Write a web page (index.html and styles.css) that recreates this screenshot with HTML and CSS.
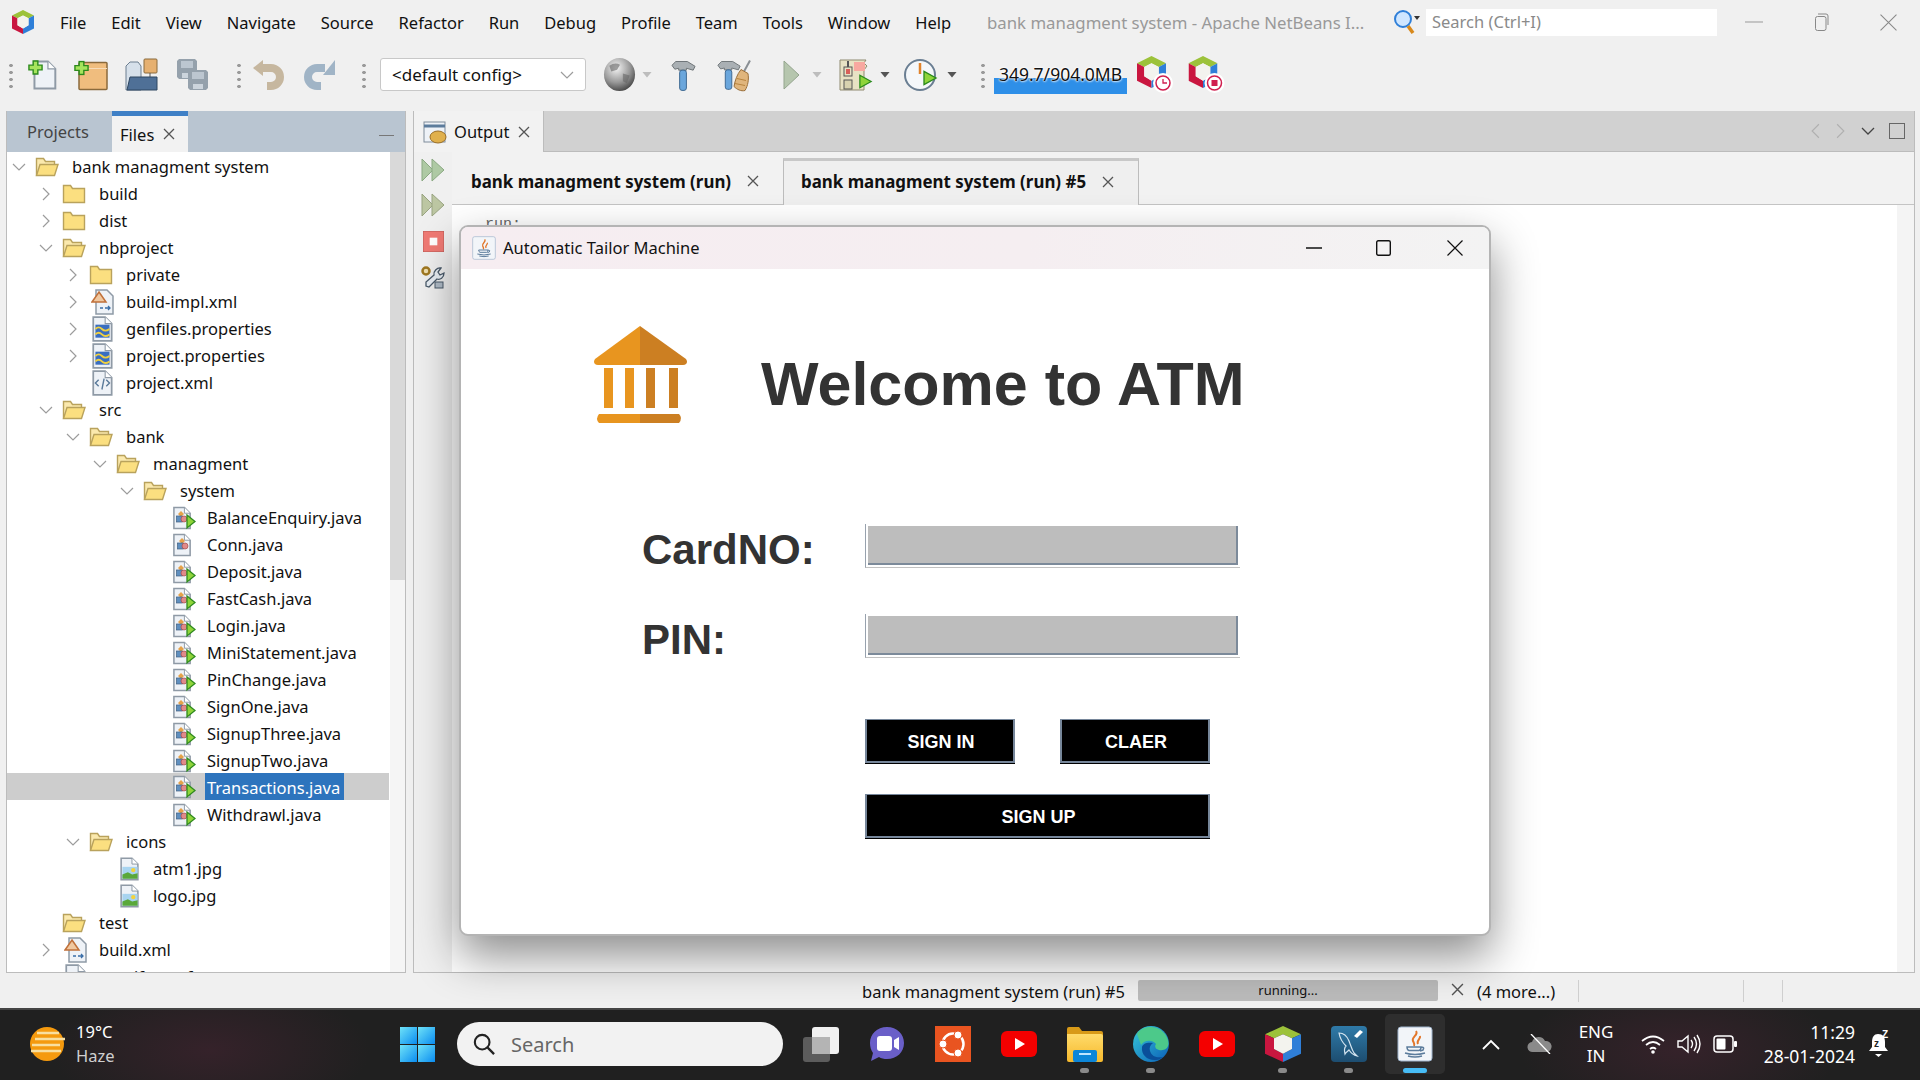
FILE: index.html
```html
<!DOCTYPE html>
<html lang="en">
<head>
    <meta charset="UTF-8">
    <title>bank managment system - Apache NetBeans IDE</title>
    <link rel="stylesheet" href="styles.css">
</head>
<body>
<!-- icon sprites -->
<svg class="defs" aria-hidden="true">
    <defs>
        <linearGradient id="gStart" x1="0" y1="0" x2="1" y2="1"><stop offset="0" stop-color="#6fe3f8"/><stop offset="1" stop-color="#0a8cf0"/></linearGradient>
        <linearGradient id="gFolder" x1="0" y1="0" x2="0" y2="1"><stop offset="0" stop-color="#ffdb6b"/><stop offset="1" stop-color="#f6b92c"/></linearGradient>
        <linearGradient id="gEdge" x1="0" y1="0" x2="1" y2="1"><stop offset="0" stop-color="#37c8d8"/><stop offset="1" stop-color="#0b5fb8"/></linearGradient>
        <linearGradient id="gSql" x1="0" y1="0" x2="0" y2="1"><stop offset="0" stop-color="#2f7aa8"/><stop offset="1" stop-color="#1d4d70"/></linearGradient>
        <radialGradient id="gGlobe" cx=".4" cy=".3" r=".8"><stop offset="0" stop-color="#f4f4f4"/><stop offset=".55" stop-color="#999"/><stop offset="1" stop-color="#333"/></radialGradient>
        <symbol id="nb" viewBox="3 1 18 22" preserveAspectRatio="none">
            <polygon points="12,1 21,6 16.5,8.5 12,6 7.5,8.5 3,6" fill="#9cc23a"/>
            <polygon points="3,6 7.5,8.5 7.5,15 12,18 12,23 3,18" fill="#c9163f"/>
            <polygon points="21,6 16.5,8.5 16.5,15 12,18 12,23 21,18" fill="#2f7fd8"/>
            <polygon points="12,6 16.5,8.5 16.5,15 12,18 7.5,15 7.5,8.5" fill="#f3f3ee"/>
        </symbol>
        <symbol id="folder" viewBox="0 0 24 20">
            <path d="M1.5 1.5h7l2 3h12v14h-21z" fill="#fbdf80" stroke="#b9a25c" stroke-width="1.4"/>
        </symbol>
        <symbol id="folder-open" viewBox="0 0 24 20">
            <path d="M1.5 18.5v-17h7l2 3h9v3" fill="#fbe9ad" stroke="#b9a25c" stroke-width="1.4"/>
            <path d="M1.5 18.5l3.5-11h18l-3.5 11z" fill="#fbdf80" stroke="#b9a25c" stroke-width="1.4"/>
        </symbol>
        <symbol id="page" viewBox="0 0 22 24">
            <path d="M2 1h11l6 6v16H2z" fill="#eef2f7" stroke="#8f9aa6" stroke-width="1.6"/>
            <path d="M13 1v6h6" fill="#fff" stroke="#8f9aa6" stroke-width="1"/>
        </symbol>
        <symbol id="java-main" viewBox="0 0 24 24">
            <use href="#page" width="21" height="24"/>
            <polygon points="9,5 12,8 9,11 6,8" fill="#e5a24a"/>
            <rect x="4.5" y="10" width="6" height="6" fill="#5f8fbf" stroke="#3f5f80" stroke-width=".7"/>
            <circle cx="12" cy="13" r="3" fill="#e08a8a" stroke="#a84a4a" stroke-width=".7"/>
            <path d="M15 9l8 6.5-8 6.5z" fill="#8fd43a" stroke="#2f8a1f" stroke-width="1.3"/>
        </symbol>
        <symbol id="java-plain" viewBox="0 0 24 24">
            <use href="#page" width="21" height="24"/>
            <polygon points="10,5 13,8 10,11 7,8" fill="#e5a24a"/>
            <rect x="5.5" y="10" width="6" height="6" fill="#5f8fbf" stroke="#3f5f80" stroke-width=".7"/>
            <circle cx="13" cy="13" r="3" fill="#e08a8a" stroke="#a84a4a" stroke-width=".7"/>
        </symbol>
        <symbol id="ant" viewBox="0 0 24 26">
            <path d="M5 1h11l6 6v18H5z" fill="#eef2f7" stroke="#8f9aa6" stroke-width="1.5"/>
            <path d="M8 3l7 10H1z" fill="#f0c8a0" stroke="#c0703a" stroke-width="1.5"/>
            <path d="M9 19h3M14 19h5M17 17l2 2-2 2" fill="none" stroke="#3a6ea8" stroke-width="1.3"/>
        </symbol>
        <symbol id="props" viewBox="0 0 22 24">
            <use href="#page" width="22" height="24"/>
            <rect x="4" y="8" width="13" height="12" fill="#3a6ec0"/>
            <path d="M4 12q3-3 6 0t7 0M4 17q3-3 6 0t7 0" fill="none" stroke="#f0d040" stroke-width="1.7"/>
        </symbol>
        <symbol id="xml" viewBox="0 0 22 24">
            <use href="#page" width="22" height="24"/>
            <path d="M7 9l-3 3 3 3M14 9l3 3-3 3M10 18l2-10" fill="none" stroke="#5a7a9a" stroke-width="1.3"/>
        </symbol>
        <symbol id="image" viewBox="0 0 20 24">
            <use href="#page" width="20" height="24"/>
            <rect x="3" y="10" width="14" height="11" fill="#a8d4f0"/>
            <circle cx="13" cy="13" r="2" fill="#f4d23c"/>
            <path d="M3 21v-4l5-2 4 2 5-1v5z" fill="#5aa83a"/>
        </symbol>
        <symbol id="plus" viewBox="0 0 16 16">
            <path d="M5.5 1h5v4.500H15v5h-4.500V15h-5v-4.500H1v-5h4.500z" fill="#a6e45c" stroke="#2c8a1c" stroke-width="1.5"/>
        </symbol>
        <symbol id="floppy" viewBox="0 0 22 22">
            <path d="M1 3l2-2h16l2 2v16l-2 2H3l-2-2z" fill="#95a1ac"/>
            <rect x="5" y="3" width="12" height="7" fill="#bcc6d0"/>
            <rect x="6" y="15" width="10" height="5" fill="#ccd4dc"/>
        </symbol>
        <symbol id="hammer" viewBox="0 0 28 34">
            <path d="M2 7l4-4h12l8 5-2 4-7-2v2H9v-2L5 11z" fill="#aab0b4" stroke="#6c7276" stroke-width="1"/>
            <rect x="10" y="12" width="7" height="21" rx="2.5" fill="#6aa6dc" stroke="#3a6690" stroke-width="1"/>
        </symbol>
        <symbol id="small-play" viewBox="0 0 24 24">
            <path d="M3 2l18 10L3 22z" fill="#8fd43a" stroke="#2a8a1c" stroke-width="2"/>
        </symbol>
        <symbol id="java-cup" viewBox="0 0 36 36">
            <rect x="1" y="1" width="34" height="34" rx="3" fill="#f2f5f9" stroke="#9fb4cc"/>
            <path d="M19 5c3 4-5 6-3 10 1 2 2 3 1 5M23 10c1 3-4 4-2 8" fill="none" stroke="#e2762a" stroke-width="2"/>
            <path d="M10 21h14q0 3-2 3.500h-10q-2-.5-2-3.500zM24 21q4 0 2 3l-3 1M8 27q10 3 20 0M11 30q7 2 14 0" fill="none" stroke="#5c7c9c" stroke-width="1.5"/>
        </symbol>
        <symbol id="yt" viewBox="0 0 36 26">
            <rect width="36" height="26" rx="6" fill="#f40000"/>
            <path d="M14 7l10 6-10 6z" fill="#fff"/>
        </symbol>
        <symbol id="x" viewBox="0 0 12 12">
            <path d="M1 1l10 10M11 1L1 11" fill="none" stroke="currentColor" stroke-width="1.3"/>
        </symbol>
        <symbol id="down" viewBox="0 0 14 8">
            <path d="M1 1l6 6 6-6" fill="none" stroke="#9c9c9c" stroke-width="1.2"/>
        </symbol>
        <symbol id="right" viewBox="0 0 8 14">
            <path d="M1 1l6 6-6 6" fill="none" stroke="#9c9c9c" stroke-width="1.2"/>
        </symbol>
    </defs>
</svg>

<div class="app">
    <header class="titlebar">
        <svg class="app-logo"><use href="#nb" width="22" height="24"/></svg>
        <nav class="menu">
            <span>File</span><span>Edit</span><span>View</span><span>Navigate</span><span>Source</span><span>Refactor</span><span>Run</span><span>Debug</span><span>Profile</span><span>Team</span><span>Tools</span><span>Window</span><span>Help</span>
        </nav>
        <div class="ide-title">bank managment system - Apache NetBeans I...</div>
        <svg class="find-icon" viewBox="0 0 28 26">
            <circle cx="11" cy="10" r="8" fill="#cfe6ff" stroke="#2f7fd8" stroke-width="2"/>
            <path d="M16 17l5 7" stroke="#d8891c" stroke-width="3.5"/>
            <path d="M22 7h6l-3 4z" fill="#333"/>
        </svg>
        <div class="find-box">Search (Ctrl+I)</div>
        <div class="win-ctrls">
            <svg class="ctl-min" viewBox="0 0 18 2"><path d="M0 1h18" stroke="#999"/></svg>
            <svg class="ctl-restore" viewBox="0 0 14 18"><path d="M3 1h8q2 0 2 2v9" fill="none" stroke="#888"/><rect x=".5" y="3.5" width="10.5" height="14" rx="2" fill="none" stroke="#888"/></svg>
            <svg class="ctl-close" viewBox="0 0 16 16"><path d="M.5.5l15 15M15.500.5l-15 15" stroke="#888"/></svg>
        </div>
    </header>

    <div class="toolbar">
        <i class="grip"></i>
        <svg class="t30 ml15" viewBox="0 0 30 31"><use href="#page" x="4" y="1" width="27" height="30"/><use href="#plus" width="15" height="15" y="1"/></svg>
        <svg class="t34 ml16" viewBox="0 0 34 31"><rect x="5" y="3" width="28" height="27" rx="1" fill="#f0bd7e" stroke="#8a6a3c" stroke-width="1.5"/><path d="M5 9h28" stroke="#f8dcb8"/><use href="#plus" width="15" height="15" y="1"/></svg>
        <svg class="t33 ml17" viewBox="0 0 33 33"><path d="M1 8l4-4h8l3 4v24H1z" fill="#d6e0ea" stroke="#6c7e90"/><rect x="19" y="1" width="13" height="14" rx="1" fill="#e6b070" stroke="#8a6a3c"/><path d="M25 15v5" stroke="#555"/><path d="M5 19h27v13H2z" fill="#4f7097" stroke="#2f4660"/></svg>
        <svg class="t33 ml18" viewBox="0 0 33 33"><use href="#floppy" width="22" height="22"/><use href="#floppy" x="11" y="11" width="22" height="22"/></svg>
        <i class="grip ml28"></i>
        <svg class="t32 ml12" viewBox="0 0 32 32"><path d="M10 9h8a9 9 0 0 1 0 18h-4" fill="none" stroke="#c6b79f" stroke-width="8"/><path d="M0 9l10-8v16z" fill="#c6b79f"/></svg>
        <svg class="t32 ml18" viewBox="0 0 32 32"><path d="M22 9h-8a9 9 0 0 0 0 18h4" fill="none" stroke="#a0b4c6" stroke-width="8"/><path d="M32 1v15H20z" fill="#a0b4c6"/></svg>
        <i class="grip ml27"></i>
        <div class="combo ml14"><span>&lt;default config&gt;</span><svg class="combo-arrow"><use href="#down"/></svg></div>
        <svg class="t33 ml17" viewBox="0 0 33 34"><ellipse cx="16.5" cy="17" rx="16" ry="17" fill="url(#gGlobe)"/><path d="M6 8q6-4 11-1l-3 5-6 2zM20 16l7 2-3 8-4-2z" fill="#666" opacity=".6"/></svg>
        <i class="caret caret-light ml6"></i>
        <svg class="t27 ml18" viewBox="0 0 28 34"><use href="#hammer" width="28" height="34"/></svg>
        <svg class="t36 ml19" viewBox="0 0 36 34"><use href="#hammer" width="26" height="34"/><path d="M34 3l-6 11" stroke="#8a8f94" stroke-width="2"/><path d="M25 12l7 4c1 6 0 12-3 17-4 1-8-1-11-4 1-6 3-12 7-17z" fill="#e0b57c" stroke="#9a6e38"/><path d="M21 21l9 2M19 26l10 2" stroke="#b8843f"/></svg>
        <svg class="t17 ml31" viewBox="0 0 17 30"><path d="M1 1l15 14L1 29z" fill="#b6c6ae" stroke="#94a58e"/></svg>
        <i class="caret caret-light ml12"></i>
        <svg class="t34 ml17" viewBox="0 0 34 34"><path d="M1 2h26l-2 3 3 3-3 4v20H1z" fill="#e8e2c4" stroke="#8f8a70"/><rect x="5" y="9" width="8" height="9" fill="#e8e2c4" stroke="#555"/><rect x="7" y="11" width="4" height="5" fill="#d8605a"/><path d="M9 3v6" stroke="#555" stroke-width="2"/><rect x="15" y="4" width="11" height="9" fill="#f8a8a0"/><rect x="5" y="22" width="8" height="9" fill="#d8d2b0" stroke="#555"/><use href="#small-play" x="19" y="14" width="15" height="19"/></svg>
        <i class="caret ml7"></i>
        <svg class="t34 ml14" viewBox="0 0 34 34"><circle cx="16" cy="17" r="15" fill="#f4f7fa" stroke="#6a7e92" stroke-width="2"/><path d="M16 5v11" stroke="#e0832c" stroke-width="2.5"/><use href="#small-play" x="18" y="9" width="16" height="22"/></svg>
        <i class="caret ml9"></i>
        <i class="grip ml24"></i>
        <div class="memory ml9">349.7/904.0MB</div>
        <svg class="t36 ml10" viewBox="0 0 36 37"><use href="#nb" width="29" height="32"/><circle cx="26" cy="27" r="10" fill="#fff"/><circle cx="26" cy="27" r="7" fill="#fff" stroke="#d01f4f" stroke-width="1.5"/><path d="M26 23v4h4" fill="none" stroke="#d01f4f" stroke-width="1.3"/></svg>
        <svg class="t37 ml15" viewBox="0 0 36 37"><use href="#nb" width="29" height="32"/><circle cx="26" cy="27" r="10" fill="#fff"/><circle cx="26" cy="27" r="7" fill="#fff" stroke="#d01f4f" stroke-width="1.5"/><rect x="23" y="24" width="6" height="6" fill="#d01f4f"/></svg>
    </div>

    <main class="panels">
        <section class="files-pane">
            <div class="pane-tabs">
                <div class="ptab">Projects</div>
                <div class="ptab ptab-active">Files <svg class="tab-x"><use href="#x"/></svg></div>
                <i class="pane-min"></i>
            </div>
            <div class="tree-wrap">
                <ul class="tree">
                    <li class="d0"><svg class="ar"><use href="#down" width="14" height="8" x="5" y="8"/></svg><svg class="ico"><use href="#folder-open"/></svg>bank managment system</li>
                    <li class="d1"><svg class="ar"><use href="#right" width="8" height="14" x="8" y="5"/></svg><svg class="ico"><use href="#folder"/></svg>build</li>
                    <li class="d1"><svg class="ar"><use href="#right" width="8" height="14" x="8" y="5"/></svg><svg class="ico"><use href="#folder"/></svg>dist</li>
                    <li class="d1"><svg class="ar"><use href="#down" width="14" height="8" x="5" y="8"/></svg><svg class="ico"><use href="#folder-open"/></svg>nbproject</li>
                    <li class="d2"><svg class="ar"><use href="#right" width="8" height="14" x="8" y="5"/></svg><svg class="ico"><use href="#folder"/></svg>private</li>
                    <li class="d2"><svg class="ar"><use href="#right" width="8" height="14" x="8" y="5"/></svg><svg class="ico ico-file"><use href="#ant"/></svg>build-impl.xml</li>
                    <li class="d2"><svg class="ar"><use href="#right" width="8" height="14" x="8" y="5"/></svg><svg class="ico ico-file"><use href="#props"/></svg>genfiles.properties</li>
                    <li class="d2"><svg class="ar"><use href="#right" width="8" height="14" x="8" y="5"/></svg><svg class="ico ico-file"><use href="#props"/></svg>project.properties</li>
                    <li class="d2"><i class="ar"></i><svg class="ico ico-file"><use href="#xml"/></svg>project.xml</li>
                    <li class="d1"><svg class="ar"><use href="#down" width="14" height="8" x="5" y="8"/></svg><svg class="ico"><use href="#folder-open"/></svg>src</li>
                    <li class="d2"><svg class="ar"><use href="#down" width="14" height="8" x="5" y="8"/></svg><svg class="ico"><use href="#folder-open"/></svg>bank</li>
                    <li class="d3"><svg class="ar"><use href="#down" width="14" height="8" x="5" y="8"/></svg><svg class="ico"><use href="#folder-open"/></svg>managment</li>
                    <li class="d4"><svg class="ar"><use href="#down" width="14" height="8" x="5" y="8"/></svg><svg class="ico"><use href="#folder-open"/></svg>system</li>
                    <li class="d5"><i class="ar"></i><svg class="ico ico-file"><use href="#java-main"/></svg>BalanceEnquiry.java</li>
                    <li class="d5"><i class="ar"></i><svg class="ico ico-file"><use href="#java-plain"/></svg>Conn.java</li>
                    <li class="d5"><i class="ar"></i><svg class="ico ico-file"><use href="#java-main"/></svg>Deposit.java</li>
                    <li class="d5"><i class="ar"></i><svg class="ico ico-file"><use href="#java-main"/></svg>FastCash.java</li>
                    <li class="d5"><i class="ar"></i><svg class="ico ico-file"><use href="#java-main"/></svg>Login.java</li>
                    <li class="d5"><i class="ar"></i><svg class="ico ico-file"><use href="#java-main"/></svg>MiniStatement.java</li>
                    <li class="d5"><i class="ar"></i><svg class="ico ico-file"><use href="#java-main"/></svg>PinChange.java</li>
                    <li class="d5"><i class="ar"></i><svg class="ico ico-file"><use href="#java-main"/></svg>SignOne.java</li>
                    <li class="d5"><i class="ar"></i><svg class="ico ico-file"><use href="#java-main"/></svg>SignupThree.java</li>
                    <li class="d5"><i class="ar"></i><svg class="ico ico-file"><use href="#java-main"/></svg>SignupTwo.java</li>
                    <li class="d5 row-sel"><i class="ar"></i><svg class="ico ico-file"><use href="#java-main"/></svg><span class="sel-text">Transactions.java</span></li>
                    <li class="d5"><i class="ar"></i><svg class="ico ico-file"><use href="#java-main"/></svg>Withdrawl.java</li>
                    <li class="d2"><svg class="ar"><use href="#down" width="14" height="8" x="5" y="8"/></svg><svg class="ico"><use href="#folder-open"/></svg>icons</li>
                    <li class="d3"><i class="ar"></i><svg class="ico ico-file"><use href="#image"/></svg>atm1.jpg</li>
                    <li class="d3"><i class="ar"></i><svg class="ico ico-file"><use href="#image"/></svg>logo.jpg</li>
                    <li class="d1"><i class="ar"></i><svg class="ico"><use href="#folder-open"/></svg>test</li>
                    <li class="d1"><svg class="ar"><use href="#right" width="8" height="14" x="8" y="5"/></svg><svg class="ico ico-file"><use href="#ant"/></svg>build.xml</li>
                    <li class="d1"><i class="ar"></i><svg class="ico ico-file"><use href="#xml"/></svg>manifest.mf</li>
                </ul>
                <div class="tree-scroll"><div class="tree-thumb"></div></div>
            </div>
        </section>

        <section class="output-pane">
            <div class="output-tabs">
                <div class="otab">
                    <svg class="otab-ico" viewBox="0 0 24 24"><rect x="1" y="2" width="21" height="20" fill="#eef2f7" stroke="#7f8c9a"/><path d="M1 6h21" stroke="#5c7c9c" stroke-width="3"/><ellipse cx="15" cy="17" rx="8" ry="6" fill="#e0b04c" stroke="#9a6e28"/></svg>
                    Output <svg class="tab-x"><use href="#x"/></svg>
                </div>
                <div class="pane-nav">
                    <svg class="nav-i" viewBox="0 0 8 14"><path d="M7 1L1 7l6 6" fill="none" stroke="#b0b0b0"/></svg>
                    <svg class="nav-i" viewBox="0 0 8 14"><path d="M1 1l6 6-6 6" fill="none" stroke="#b0b0b0"/></svg>
                    <svg class="nav-d" viewBox="0 0 14 8"><path d="M1 1l6 6 6-6" fill="none" stroke="#444" stroke-width="1.3"/></svg>
                    <i class="nav-box"></i>
                </div>
            </div>
            <div class="output-main">
                <div class="gutter">
                    <svg class="g-ico" viewBox="0 0 24 24"><path d="M1 1l11 11L1 23z" fill="#aec9a4" stroke="#8aa982"/><path d="M11 1l12 11-12 11z" fill="#aec9a4" stroke="#8aa982"/></svg>
                    <svg class="g-ico" viewBox="0 0 24 24"><path d="M1 1l11 11L1 23z" fill="#bcc6a2" stroke="#98a380"/><path d="M11 1l12 11-12 11z" fill="#bcc6a2" stroke="#98a380"/></svg>
                    <svg class="g-stop" viewBox="0 0 22 22"><rect width="22" height="22" fill="#f07a74" stroke="#b85a55"/><rect x="7" y="7" width="8" height="8" fill="#fff"/></svg>
                    <svg class="g-ico" viewBox="0 0 24 24"><circle cx="5" cy="5" r="3.5" fill="#f0e0b0" stroke="#a07820" stroke-width="2.5"/><path d="M20 2l-3 4 2 3 4-2c0 5-4 7-7 6l-8 8-3-1 0-4 8-7c-1-3 3-8 7-7z" fill="#e8eef4" stroke="#4a5a6a" stroke-width="1.3"/><rect x="14" y="16" width="8" height="6" fill="#b0bcc8" stroke="#4a5a6a"/></svg>
                </div>
                <div class="console">
                    <div class="sub-tabs">
                        <div class="stab">bank managment system (run) <svg class="tab-x"><use href="#x"/></svg></div>
                        <div class="stab stab-active">bank managment system (run) #5 <svg class="tab-x"><use href="#x"/></svg></div>
                    </div>
                    <div class="console-body">
                        <pre class="console-text">run:</pre>
                        <div class="console-scroll"></div>
                    </div>
                </div>
            </div>
        </section>
    </main>

    <footer class="statusbar">
        <span class="st-name">bank managment system (run) #5</span>
        <div class="st-progress">running...</div>
        <svg class="st-x"><use href="#x"/></svg>
        <span class="st-more">(4 more...)</span>
        <i class="st-sep"></i>
        <i class="st-sep st-sep2"></i>
        <i class="st-sep st-sep3"></i>
    </footer>

    <!-- the running swing app -->
    <div class="atm-window">
        <div class="atm-title">
            <svg class="atm-ico"><use href="#java-cup"/></svg>
            <span class="atm-name">Automatic Tailor Machine</span>
            <div class="atm-ctrls">
                <svg class="a-min" viewBox="0 0 16 2"><path d="M0 1h16" stroke="#111" stroke-width="1.3"/></svg>
                <svg class="a-max" viewBox="0 0 15 16"><rect x=".7" y=".7" width="13.6" height="14.6" rx="1.5" fill="none" stroke="#111" stroke-width="1.4"/></svg>
                <svg class="a-close" viewBox="0 0 16 16"><path d="M.5.5l15 15M15.500.5l-15 15" stroke="#111" stroke-width="1.2"/></svg>
            </div>
        </div>
        <div class="atm-body">
            <div class="atm-head">
                <svg class="bank-logo" viewBox="0 0 95 97">
                    <path d="M47 0L2 33q-2 3 0 5 1 1 3 1h42z" fill="#e8951f"/>
                    <path d="M47 0l46 33q2 3 0 5-1 1-3 1H47z" fill="#cc7f22"/>
                    <rect x="11" y="42" width="9" height="40" fill="#e8951f"/>
                    <rect x="32" y="42" width="9" height="40" fill="#e8951f"/>
                    <rect x="53" y="42" width="9" height="40" fill="#cc7f22"/>
                    <rect x="76" y="42" width="9" height="40" fill="#cc7f22"/>
                    <path d="M6 88h41v9H6q-4-4 0-9z" fill="#e8951f"/>
                    <path d="M47 88h39q4 4 0 9H47z" fill="#cc7f22"/>
                </svg>
                <h1>Welcome to ATM</h1>
            </div>
            <form class="atm-form">
                <label>CardNO:</label>
                <div class="field"><input type="text"></div>
                <label>PIN:</label>
                <div class="field"><input type="password"></div>
                <div class="atm-btns">
                    <button type="button">SIGN IN</button>
                    <button type="button">CLAER</button>
                    <button type="button" class="btn-wide">SIGN UP</button>
                </div>
            </form>
        </div>
    </div>

    <div class="taskbar">
        <div class="weather">
            <svg class="w-ico" viewBox="0 0 36 36"><circle cx="18" cy="18" r="17" fill="#f59a0e"/><path d="M8 7h22M6 13h30M3 19h28M2 25h30" stroke="#f8dfa0" stroke-width="2.3"/></svg>
            <div class="w-text"><div>19°C</div><div class="w-sub">Haze</div></div>
        </div>
        <svg class="start" viewBox="0 0 35 35"><rect width="17" height="17" fill="url(#gStart)"/><rect x="18" width="17" height="17" fill="url(#gStart)"/><rect y="18" width="17" height="17" fill="url(#gStart)"/><rect x="18" y="18" width="17" height="17" fill="url(#gStart)"/></svg>
        <div class="tb-search">
            <svg class="s-ico" viewBox="0 0 24 24"><circle cx="10" cy="10" r="8" fill="none" stroke="#222" stroke-width="2.3"/><path d="M16 16l7 7" stroke="#222" stroke-width="2.5"/></svg>
            Search
        </div>
        <div class="tb-apps">
            <div class="cell"><svg class="ai" viewBox="0 0 36 36"><rect y="11" width="27" height="25" rx="3" fill="#5c5c5c"/><rect x="9" y="1" width="27" height="27" rx="3" fill="#f0f0f0"/><rect x="9" y="11" width="18" height="17" fill="#b4b4b4"/></svg></div>
            <div class="cell"><svg class="ai" viewBox="0 0 36 36"><path d="M18 1c10 0 17 7 17 16s-7 16-17 16c-3 0-6-.5-8-2l-8 4 2-8C2 24 1 21 1 17 1 8 8 1 18 1z" fill="#6a5fc8"/><rect x="8" y="10" width="15" height="15" rx="3" fill="#fff"/><path d="M25 14l5-3v13l-5-3z" fill="#fff"/></svg></div>
            <div class="cell"><svg class="ai" viewBox="0 0 36 36"><rect width="36" height="36" fill="#e95420"/><circle cx="18" cy="18" r="10.5" fill="none" stroke="#fff" stroke-width="2.5"/><circle cx="8" cy="18" r="4" fill="#fff" stroke="#e95420"/><circle cx="23" cy="9" r="4" fill="#fff" stroke="#e95420"/><circle cx="23" cy="27" r="4" fill="#fff" stroke="#e95420"/></svg></div>
            <div class="cell"><svg class="ai ai-yt"><use href="#yt"/></svg></div>
            <div class="cell running"><svg class="ai" viewBox="0 0 36 36"><path d="M0 3q0-2 2-2h10l3 4h19q2 0 2 2v4H0z" fill="#d89a18"/><path d="M0 8h34q2 0 2 2v24q0 2-2 2H2q-2 0-2-2z" fill="url(#gFolder)"/><rect x="6" y="24" width="24" height="12" rx="2" fill="#0d86d8"/><rect x="12" y="27" width="12" height="2" fill="#bfe4ff"/></svg></div>
            <div class="cell running"><svg class="ai" viewBox="0 0 36 36"><circle cx="18" cy="18" r="18" fill="url(#gEdge)"/><path d="M4 8C10-2 30-2 35 14c2 8-3 11-9 10-5-1-4-5-3-6-4-5-12-4-15 1z" fill="#4cc98a"/><path d="M9 21c-1 8 6 14 14 13 3 0 5-2 7-3-6 1-11 0-13-6-1-3 0-6 3-8-5-1-10 0-11 4z" fill="#0a4f9a"/></svg></div>
            <div class="cell"><svg class="ai ai-yt"><use href="#yt"/></svg></div>
            <div class="cell running"><svg class="ai"><use href="#nb" width="36" height="36"/></svg></div>
            <div class="cell running"><svg class="ai" viewBox="0 0 36 36"><rect width="36" height="36" rx="4" fill="url(#gSql)"/><path d="M8 7c5 0 8 3 10 8s3 9 5 12l3 3c-4-1-6-3-8-6-1 1-3 2-4 4-1-4-1-6 1-8-3-3-6-7-7-13z" fill="none" stroke="#d4e4f0" stroke-width="1.2"/><path d="M23 10l6-6 3 2-6 6z" fill="#fff"/></svg></div>
            <div class="cell active"><div class="active-bg"><svg class="ai"><use href="#java-cup"/></svg></div></div>
        </div>
        <svg class="tr-chev" viewBox="0 0 18 11"><path d="M1 10l8-8 8 8" fill="none" stroke="#fff" stroke-width="1.8"/></svg>
        <svg class="tr-cloud" viewBox="0 0 25 20"><path d="M6 18a5 5 0 0 1-1-10 7 7 0 0 1 13-1 5.500 5.500 0 0 1 2 11z" fill="#8a8a8a"/><path d="M4 0l19 20" stroke="#fff" stroke-width="1.3"/></svg>
        <div class="tr-lang"><div>ENG</div><div>IN</div></div>
        <svg class="tr-wifi" viewBox="0 0 24 20"><path d="M1 7q11-9 22 0M5 11q7-6 14 0M9 15q3-2.500 6 0" fill="none" stroke="#fff" stroke-width="1.7"/><circle cx="12" cy="18" r="1.8" fill="#fff"/></svg>
        <svg class="tr-vol" viewBox="0 0 24 20"><path d="M1 7h4l6-5v16l-6-5H1z" fill="none" stroke="#fff" stroke-width="1.4"/><path d="M14 6q3 4 0 8M17 3q5 7 0 14M20 1q6 9 0 18" fill="none" stroke="#fff" stroke-width="1.4"/></svg>
        <svg class="tr-bat" viewBox="0 0 24 18"><rect x="1" y="1" width="19" height="16" rx="3" fill="none" stroke="#fff" stroke-width="1.5"/><rect x="3.5" y="3.5" width="9" height="11" rx="1" fill="#fff"/><rect x="21" y="6" width="3" height="6" rx="1" fill="#fff"/></svg>
        <div class="tr-clock"><div>11:29</div><div>28-01-2024</div></div>
        <svg class="tr-bell" viewBox="0 0 21 28"><path d="M10 4c5 0 7 3 7 8v5l3 4H1l3-4v-5c0-5 2-8 6-8z" fill="#fff"/><path d="M7 24h7l-3.500 3z" fill="#fff"/><text x="6" y="17" class="bell-z">z</text><text x="14" y="8" class="bell-z bell-z2">Z</text></svg>
    </div>
</div>
</body>
</html>
```

FILE: styles.css
```css
* {
    box-sizing: border-box;
}
html, body {
    margin: 0;
    height: 100%;
    overflow: hidden;
}
body {
    font-family: "Noto Sans", "Open Sans", sans-serif;
    font-size: 16.5px;
    color: #111;
    background: #f0f0f0;
}
i {
    display: block;
    flex: none;
}
svg {
    display: block;
    flex: none;
}
.defs {
    position: absolute;
    width: 0;
    height: 0;
}
.app {
    position: relative;
    width: 1920px;
    height: 1080px;
    display: flex;
    flex-direction: column;
    overflow: hidden;
}

/* top window bar */
.titlebar {
    height: 46px;
    display: flex;
    align-items: center;
    padding: 0 0 2px 12px;
    flex: none;
}
.app-logo {
    width: 22px;
    height: 24px;
}
.menu {
    width: 927px;
    margin-left: 26px;
    display: flex;
    gap: 24.9px;
}
.ide-title {
    width: 405px;
    font-size: 16.8px;
    color: #999;
    white-space: nowrap;
}
.find-icon {
    width: 28px;
    height: 26px;
}
.find-box {
    width: 291px;
    height: 27px;
    margin-left: 6px;
    padding-left: 6px;
    line-height: 26px;
    background: #fff;
    color: #8a8a8a;
}
.win-ctrls {
    display: flex;
    align-items: center;
    margin-left: 28px;
}
.ctl-min {
    width: 18px;
    height: 2px;
}
.ctl-restore {
    width: 14px;
    height: 18px;
    margin-left: 52px;
}
.ctl-close {
    width: 17px;
    height: 17px;
    margin-left: 51px;
}

/* toolbar */
.toolbar {
    height: 65px;
    display: flex;
    align-items: center;
    padding: 0 0 8px 9px;
    flex: none;
}
.grip {
    width: 4px;
    height: 26px;
    background: radial-gradient(circle, #9a9a9a 1.5px, transparent 2px) 0 0 / 4px 7px;
}
.t17 { width: 17px; height: 30px; }
.t27 { width: 27px; height: 34px; }
.t30 { width: 30px; height: 31px; }
.t32 { width: 32px; height: 32px; }
.t33 { width: 33px; height: 33px; }
.t34 { width: 34px; height: 34px; }
.t36 { width: 36px; height: 37px; }
.t37 { width: 37px; height: 37px; }
.ml6 { margin-left: 6px; }
.ml7 { margin-left: 7px; }
.ml9 { margin-left: 9px; }
.ml10 { margin-left: 10px; }
.ml12 { margin-left: 12px; }
.ml14 { margin-left: 14px; }
.ml15 { margin-left: 15px; }
.ml16 { margin-left: 16px; }
.ml17 { margin-left: 17px; }
.ml18 { margin-left: 18px; }
.ml19 { margin-left: 19px; }
.ml24 { margin-left: 24px; }
.ml27 { margin-left: 27px; }
.ml28 { margin-left: 28px; }
.ml31 { margin-left: 31px; }
.combo {
    width: 206px;
    height: 33px;
    font-size: 17px;
    background: #fff;
    border: 1px solid #c8c8c8;
    border-radius: 3px;
    display: flex;
    align-items: center;
    justify-content: space-between;
    padding: 0 11px;
}
.combo-arrow {
    width: 14px;
    height: 8px;
}
.caret {
    width: 10px;
    height: 6px;
    background: #555;
    clip-path: polygon(0 0, 100% 0, 50% 100%);
}
.caret-light {
    background: #bdbdbd;
}
.memory {
    width: 133px;
    height: 38px;
    margin-top: 1px;
    padding-top: 6px;
    font-size: 17.5px;
    text-align: center;
    line-height: 24px;
    white-space: nowrap;
    text-shadow: 0 0 2px #fff, 0 0 2px #fff, 0 0 3px #fff;
    background: linear-gradient(#2e8fe8, #2e8fe8) bottom / 100% 16px no-repeat;
}

/* panes */
.panels {
    height: 862px;
    flex: none;
    display: flex;
    gap: 7px;
    padding: 0 5px 0 6px;
}
.files-pane, .output-pane {
    display: flex;
    flex-direction: column;
    border: 1px solid #bcbcbc;
    border-top: none;
}
.files-pane {
    width: 400px;
    flex: none;
}
.output-pane {
    flex: 1;
    min-width: 0;
}
.pane-tabs {
    height: 41px;
    flex: none;
    display: flex;
    background: #b9c5d1;
}
.ptab {
    display: flex;
    align-items: center;
    padding-left: 20px;
    width: 105px;
    color: #444;
}
.ptab-active {
    width: 76px;
    padding-left: 8px;
    gap: 9px;
    background: #f2f2f2;
    border-top: 5px solid #3f80c6;
    color: #111;
}
.tab-x {
    width: 12px;
    height: 12px;
    color: #555;
}
.pane-min {
    width: 15px;
    height: 1px;
    background: #777;
    margin: 24px 0 0 191px;
}
.tree-wrap {
    flex: 1;
    display: flex;
    min-height: 0;
    overflow: hidden;
    background: #fff;
}
.tree {
    list-style: none;
    margin: 0;
    padding: 0;
    width: 382px;
    flex: none;
}
.tree li {
    height: 27px;
    padding-top: 2px;
    display: flex;
    align-items: center;
    white-space: nowrap;
}
.tree .d0 { padding-left: 0; }
.tree .d1 { padding-left: 27px; }
.tree .d2 { padding-left: 54px; }
.tree .d3 { padding-left: 81px; }
.tree .d4 { padding-left: 108px; }
.tree .d5 { padding-left: 135px; }
.ar {
    width: 23px;
    height: 24px;
    flex: none;
}
.ico {
    width: 24px;
    height: 20px;
    margin: 0 13px 0 5px;
    flex: none;
}
.ico-file {
    width: 24px;
    height: 26px;
    margin: 0 11px 0 7px;
}
.row-sel {
    background: #cdcdcd;
}
.tree .row-sel {
    padding-top: 0;
}
.sel-text {
    background: #2d74bd;
    color: #fff;
    line-height: 27px;
    margin-left: -2px;
    padding: 1px 4px 0 2px;
    height: 27px;
}
.tree-scroll {
    width: 16px;
    flex: none;
    margin-left: 1px;
    background: #f5f5f5;
}
.tree-thumb {
    height: 428px;
    background: #d9d9d9;
}

/* output pane */
.output-tabs {
    height: 41px;
    flex: none;
    display: flex;
    justify-content: space-between;
    background: #d1d1d1;
    border-bottom: 1px solid #bcbcbc;
}
.otab {
    width: 130px;
    display: flex;
    align-items: center;
    gap: 7px;
    padding-left: 9px;
    background: #f2f2f2;
    height: 41px;
    border-right: 1px solid #bcbcbc;
}
.otab-ico {
    width: 24px;
    height: 24px;
}
.otab .tab-x {
    margin-left: 2px;
}
.pane-nav {
    display: flex;
    align-items: center;
    gap: 16px;
    padding-right: 9px;
}
.nav-i {
    width: 9px;
    height: 16px;
}
.nav-d {
    width: 14px;
    height: 8px;
}
.nav-box {
    width: 16px;
    height: 16px;
    margin-left: -2px;
    border: 1px solid #666;
}
.output-main {
    flex: 1;
    display: flex;
    min-height: 0;
}
.gutter {
    width: 38px;
    flex: none;
    display: flex;
    flex-direction: column;
    align-items: center;
    padding-top: 6px;
    gap: 11px;
    background: #f0f0f0;
}
.g-ico {
    width: 24px;
    height: 24px;
}
.g-stop {
    width: 21px;
    height: 21px;
    margin: 3px 0;
}
.console {
    flex: 1;
    min-width: 0;
    display: flex;
    flex-direction: column;
}
.sub-tabs {
    height: 53px;
    flex: none;
    display: flex;
    align-items: flex-end;
    background: #f2f2f2;
    border-bottom: 1px solid #c4c4c4;
    padding-left: 19px;
    font-weight: 700;
    font-size: 16.9px;
}
.stab {
    width: 312px;
    height: 46px;
    display: flex;
    align-items: center;
    gap: 16px;
    white-space: nowrap;
}
.stab-active {
    width: 356px;
    padding: 0 0 3px 17px;
    margin-bottom: -1px;
    height: 47px;
    border: 1px solid #bcbcbc;
    border-top: 3px solid #c8c8c8;
    border-bottom: none;
    background: #efefef;
}
.console-body {
    flex: 1;
    display: flex;
    justify-content: space-between;
    background: #fff;
}
.console-text {
    margin: 11px 0 0 33px;
    font-family: "Liberation Mono", monospace;
    font-size: 15px;
    color: #666;
}
.console-scroll {
    width: 17px;
    background: #f4f4f4;
}

/* status line */
.statusbar {
    height: 35px;
    flex: none;
    display: flex;
    align-items: center;
    padding-left: 862px;
}
.st-name {
    width: 276px;
    margin-top: 2px;
    white-space: nowrap;
}
.st-progress {
    width: 300px;
    height: 21px;
    border-radius: 2px;
    background: #bbb;
    text-align: center;
    font-size: 13px;
    line-height: 21px;
}
.st-x {
    width: 13px;
    height: 13px;
    margin: -2px 0 0 13px;
    color: #555;
}
.st-more {
    width: 101px;
    margin: 2px 0 0 13px;
}
.st-sep {
    width: 1px;
    height: 22px;
    background: #cfcfcf;
}
.st-sep2 {
    margin-left: 164px;
}
.st-sep3 {
    margin-left: 38px;
}

/* swing window, floats over the ide */
.atm-window {
    position: absolute;
    left: 459px;
    top: 225px;
    width: 1032px;
    height: 711px;
    background: #fff;
    border: 2px solid #b4b4b4;
    border-radius: 9px;
    box-shadow: 0 20px 46px rgba(0, 0, 0, 0.45);
    overflow: hidden;
    z-index: 2;
}
.atm-title {
    height: 42px;
    display: flex;
    align-items: center;
    padding-left: 11px;
    background: linear-gradient(90deg, #f6edf1, #f5eef1 55%, #f3f3f3);
}
.atm-ico {
    width: 24px;
    height: 24px;
    margin-right: 7px;
}
.atm-name {
    margin-bottom: 2px;
}
.atm-ctrls {
    display: flex;
    align-items: center;
    margin-left: auto;
    padding-right: 26px;
}
.a-min {
    width: 16px;
    height: 2px;
}
.a-max {
    width: 15px;
    height: 16px;
    margin-left: 54px;
}
.a-close {
    width: 16px;
    height: 16px;
    margin-left: 56px;
}
.atm-body {
    padding: 57px 0 0 132px;
}
.atm-head {
    display: flex;
    align-items: flex-start;
    gap: 73px;
}
.bank-logo {
    width: 95px;
    height: 97px;
}
h1 {
    margin: 19px 0 0;
    font-family: "Liberation Sans", Arial, sans-serif;
    font-weight: 700;
    font-size: 61px;
    line-height: 78px;
    color: #333;
    white-space: nowrap;
}
.atm-form {
    margin: 101px 0 0 49px;
    display: grid;
    grid-template-columns: 223px 375px;
    row-gap: 46px;
    align-items: center;
}
.atm-form label {
    height: 44px;
    padding-top: 6px;
    font-family: "Liberation Sans", Arial, sans-serif;
    font-weight: 700;
    font-size: 42px;
    line-height: 40px;
    color: #333;
}
.field {
    height: 44px;
    border-left: 1px solid #98a2ae;
    border-bottom: 1px solid #c2c2c2;
    padding: 2px;
}
.field input {
    display: block;
    width: 100%;
    height: 100%;
    padding: 0;
    background: #bdbdbd;
    border: none;
    border-right: 2px solid #7c8a9a;
    border-bottom: 2px solid #7c8a9a;
}
.atm-btns {
    grid-column: 2;
    width: 345px;
    margin-top: 15px;
    display: grid;
    grid-template-columns: 150px 150px;
    justify-content: space-between;
    row-gap: 31px;
}
.atm-btns button {
    height: 44px;
    background: #000;
    color: #fff;
    font-family: "Liberation Sans", Arial, sans-serif;
    font-weight: 700;
    font-size: 18px;
    border: 2px solid #76869a;
    border-top-width: 1px;
    box-shadow: 0 1px 0 #000;
    padding: 4px 0 0 2px;
}
.atm-btns .btn-wide {
    grid-column: 1 / 3;
}

/* windows taskbar */
.taskbar {
    position: relative;
    z-index: 3;
    height: 72px;
    flex: none;
    display: flex;
    align-items: center;
    padding-bottom: 2px;
    color: #fff;
    border-top: 2px solid #454545;
    background:
        radial-gradient(ellipse 160px 70px at 210px 40px, #35222a, transparent),
        radial-gradient(ellipse 160px 70px at 1680px 40px, #35222a, transparent),
        #202020;
}
.weather {
    width: 400px;
    flex: none;
    display: flex;
    align-items: center;
    padding-left: 29px;
    gap: 11px;
}
.w-ico {
    width: 36px;
    height: 36px;
}
.w-text {
    font-size: 16.5px;
    line-height: 24px;
}
.w-sub {
    color: #cfcfcf;
}
.start {
    width: 35px;
    height: 35px;
}
.tb-search {
    width: 326px;
    height: 44px;
    margin-left: 22px;
    border-radius: 22px;
    background: #f2f2f2;
    color: #666;
    font-size: 20px;
    display: flex;
    align-items: center;
    gap: 16px;
    padding-left: 16px;
    flex: none;
}
.s-ico {
    width: 22px;
    height: 22px;
}
.tb-apps {
    margin-left: 5px;
    display: flex;
    flex: none;
}
.cell {
    position: relative;
    width: 66px;
    height: 68px;
    display: flex;
    align-items: center;
    justify-content: center;
}
.ai {
    width: 36px;
    height: 36px;
}
.ai-yt {
    height: 26px;
}
.running::after {
    content: "";
    position: absolute;
    left: 28px;
    bottom: 5px;
    width: 9px;
    height: 5px;
    border-radius: 3px;
    background: #8a8a8a;
}
.active-bg {
    width: 60px;
    height: 60px;
    border-radius: 5px;
    background: #2e2e2e;
    display: flex;
    align-items: center;
    justify-content: center;
}
.active::after {
    content: "";
    position: absolute;
    left: 21px;
    bottom: 5px;
    width: 24px;
    height: 5px;
    border-radius: 3px;
    background: #47bcf5;
}
.tr-chev {
    width: 18px;
    height: 11px;
    margin-left: 34px;
}
.tr-cloud {
    width: 25px;
    height: 20px;
    margin-left: 27px;
}
.tr-lang {
    width: 48px;
    margin-left: 20px;
    text-align: center;
    font-size: 17px;
    line-height: 24px;
}
.tr-wifi {
    width: 24px;
    height: 20px;
    margin-left: 21px;
}
.tr-vol {
    width: 24px;
    height: 20px;
    margin-left: 12px;
}
.tr-bat {
    width: 24px;
    height: 18px;
    margin-left: 12px;
}
.tr-clock {
    width: 110px;
    margin-left: 8px;
    text-align: right;
    font-size: 17.5px;
    line-height: 24px;
}
.tr-bell {
    width: 21px;
    height: 28px;
    margin-left: 13px;
}
.bell-z {
    font-family: "Liberation Sans", sans-serif;
    font-size: 10px;
    font-weight: 700;
    fill: #222;
}
.bell-z2 {
    fill: #fff;
}
```
